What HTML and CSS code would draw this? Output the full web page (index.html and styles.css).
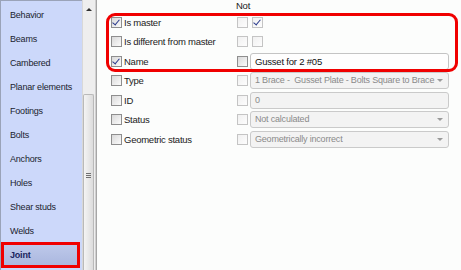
FILE: index.html
```html
<!DOCTYPE html>
<html>
  <head>
    <title>Joint properties</title>
    <link rel="stylesheet" href="styles.css">
  </head>
  <body>
    <div class="window">
      <nav class="sidebar">
        <ul class="nav-list">
          <li>Behavior</li>
          <li>Beams</li>
          <li>Cambered</li>
          <li>Planar elements</li>
          <li>Footings</li>
          <li>Bolts</li>
          <li>Anchors</li>
          <li>Holes</li>
          <li>Shear studs</li>
          <li>Welds</li>
          <li class="active">Joint</li>
        </ul>
      </nav>
      <div class="scrollbar">
        <span class="arrow"></span>
        <div class="thumb"><span class="grip"></span></div>
      </div>
      <main class="props">
        <div class="head"><span class="not">Not</span></div>
        <div class="group">
          <div class="row">
            <div class="name"><span class="cb checked"></span>Is master</div>
            <div class="value"><span class="cb dis"></span><span class="cb dis checked second"></span></div>
          </div>
          <div class="row">
            <div class="name"><span class="cb"></span>Is different from master</div>
            <div class="value"><span class="cb dis"></span><span class="cb dis second"></span></div>
          </div>
          <div class="row">
            <div class="name"><span class="cb checked"></span>Name</div>
            <div class="value"><span class="cb"></span><span class="field edit">Gusset for 2 #05</span></div>
          </div>
        </div>
        <div class="row">
          <div class="name"><span class="cb"></span>Type</div>
          <div class="value"><span class="cb dis"></span><span class="field combo">1 Brace -&nbsp; Gusset Plate - Bolts Square to Brace</span></div>
        </div>
        <div class="row">
          <div class="name"><span class="cb"></span>ID</div>
          <div class="value"><span class="cb dis"></span><span class="field">0</span></div>
        </div>
        <div class="row">
          <div class="name"><span class="cb"></span>Status</div>
          <div class="value"><span class="cb dis"></span><span class="field combo">Not calculated</span></div>
        </div>
        <div class="row">
          <div class="name"><span class="cb"></span>Geometric status</div>
          <div class="value"><span class="cb dis"></span><span class="field combo">Geometrically incorrect</span></div>
        </div>
      </main>
    </div>
  </body>
</html>
```

FILE: styles.css
```css
body {
  margin: 0;
  padding: 0;
  font-family: "Liberation Sans", Arial, sans-serif;
  font-size: 9.5px;
  letter-spacing: -0.25px;
  color: #1b1b1b;
  background-color: #fcfdfc;
}

.window {
  display: flex;
  width: 461px;
  height: 270px;
  overflow: hidden;
}

/* left category list */
.sidebar {
  width: 81px;
  border-left: 1px solid #9aa3b8;
  border-top: 1px solid #9aa3b8;
  background-color: #ccd8fa;
  font-size: 9px;
  letter-spacing: -0.2px;
}

.nav-list {
  list-style: none;
  margin: 0;
  padding: 2px 0 0 0;
}

.nav-list li {
  position: relative;
  height: 24px;
  line-height: 24px;
  padding-left: 9px;
  color: #20232e;
}

.nav-list li.active {
  margin: 0 3px 0 1px;
  padding-left: 8px;
  font-weight: bold;
  color: #18245e;
  background: linear-gradient(#bfcaeb, #a9b6de);
}

.nav-list li.active::after {
  content: "";
  position: absolute;
  top: -1px;
  left: -1px;
  right: -1px;
  bottom: -1px;
  border: 3px solid #f00000;
}

/* scrollbar */
.scrollbar {
  position: relative;
  width: 12px;
  background-color: #eeeeee;
  border-left: 1px solid #d8d8d8;
  border-right: 1px solid #d0d0d0;
  display: flex;
  flex-direction: column;
}

.arrow {
  display: block;
  margin: 8px auto 0 auto;
  width: 0;
  height: 0;
  border-left: 3px solid transparent;
  border-right: 3px solid transparent;
  border-bottom: 3px solid #303030;
}

.thumb {
  margin-top: 83px;
  margin-left: 0;
  margin-right: 1px;
  flex: 1;
  border: 1px solid #b9b9b9;
  border-bottom: none;
  border-radius: 2px 2px 0 0;
  background: linear-gradient(to right, #f4f4f4, #dcdcdc);
}

.grip {
  display: block;
  width: 5px;
  height: 5px;
  margin: 78px auto 0 auto;
  background: repeating-linear-gradient(#707070 0 1px, transparent 1px 2px);
}

/* property grid */
.props {
  flex: 1;
  border-left: 1px solid #a6a6a6;
  padding-left: 14px;
}

.head {
  height: 12.5px;
  line-height: 12px;
  padding-left: 125px;
}

.group {
  position: relative;
}

.group::after {
  content: "";
  position: absolute;
  top: 0.5px;
  left: -5px;
  right: 3px;
  bottom: -1px;
  border: 3px solid #f00000;
  border-radius: 9px;
}

.row {
  display: flex;
  align-items: center;
  height: 19.5px;
}

.name {
  display: flex;
  align-items: center;
  width: 126px;
}

.name .cb {
  margin-right: 2px;
}

.value {
  display: flex;
  align-items: center;
}

.cb {
  box-sizing: border-box;
  width: 11px;
  height: 11px;
  border: 1px solid #8e8e8e;
  background: linear-gradient(135deg, #d9d9d9, #fbfbfb);
  position: relative;
}

.cb.dis {
  border-color: #c4c4c4;
  background: linear-gradient(135deg, #f0f0f0, #fdfdfd);
}

.cb.second {
  margin-left: 4px;
}

.cb.checked::after {
  content: "";
  position: absolute;
  left: 2px;
  top: 0px;
  width: 3px;
  height: 6px;
  border-right: 1.5px solid #2a3a8c;
  border-bottom: 1.5px solid #2a3a8c;
  transform: rotate(40deg);
}

.field {
  position: relative;
  box-sizing: border-box;
  margin-left: 2px;
  width: 199px;
  height: 17px;
  line-height: 15px;
  padding-left: 4px;
  border: 1px solid #cacaca;
  border-radius: 3px;
  background-color: #f3f3f3;
  color: #8a8a8a;
  font-size: 9px;
  letter-spacing: -0.2px;
  white-space: nowrap;
  overflow: hidden;
}

.field.edit {
  background-color: #fefefe;
  border-color: #c4c4c4;
  color: #111;
  font-size: 9.5px;
}

.field.combo::after {
  content: "";
  position: absolute;
  right: 5px;
  top: 6px;
  border-left: 3px solid transparent;
  border-right: 3px solid transparent;
  border-top: 3px solid #9a9a9a;
}
```
